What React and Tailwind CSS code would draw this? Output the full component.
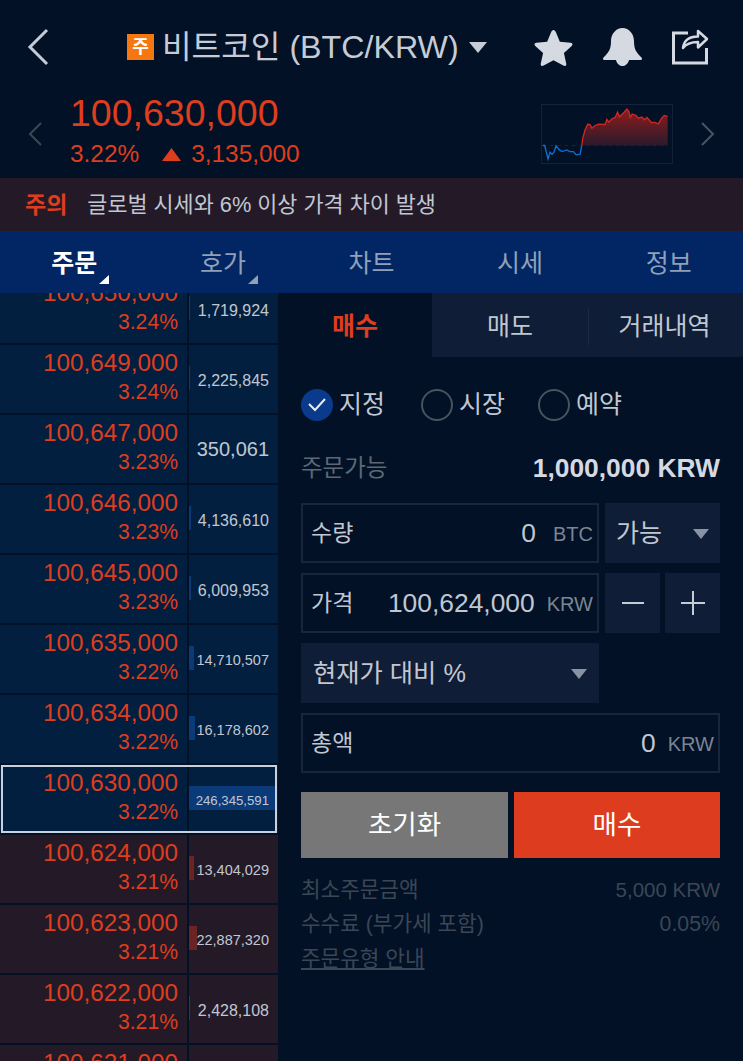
import React from 'react';

const rows = [
  { price: '100,650,000', pct: '3.24%', vol: '1,719,924', size: 'text-[16px] pt-[3px]', bar: 1 },
  { price: '100,649,000', pct: '3.24%', vol: '2,225,845', size: 'text-[16px] pt-[3px]', bar: 1 },
  { price: '100,647,000', pct: '3.23%', vol: '350,061', size: 'text-[20px]', bar: 0 },
  { price: '100,646,000', pct: '3.23%', vol: '4,136,610', size: 'text-[16px] pt-[3px]', bar: 2 },
  { price: '100,645,000', pct: '3.23%', vol: '6,009,953', size: 'text-[16px] pt-[3px]', bar: 2 },
  { price: '100,635,000', pct: '3.22%', vol: '14,710,507', size: 'text-[14.5px] pt-[3px]', bar: 5 },
  { price: '100,634,000', pct: '3.22%', vol: '16,178,602', size: 'text-[14.5px] pt-[3px]', bar: 6 },
  { price: '100,630,000', pct: '3.22%', vol: '246,345,591', size: 'text-[13.2px] pt-[3px]', bar: 88, current: true },
  { price: '100,624,000', pct: '3.21%', vol: '13,404,029', size: 'text-[14.5px] pt-[3px]', bar: 5, sell: true },
  { price: '100,623,000', pct: '3.21%', vol: '22,887,320', size: 'text-[14.5px] pt-[3px]', bar: 8, sell: true },
  { price: '100,622,000', pct: '3.21%', vol: '2,428,108', size: 'text-[16px] pt-[3px]', bar: 1, sell: true },
  { price: '100,621,000', pct: '3.21%', vol: '1,204,552', size: 'text-[16px] pt-[3px]', bar: 1, sell: true },
];

const OrderRow = ({ row }) => (
  <div className="relative flex h-[68px] mb-[2px] gap-[2px]">
    <div className={`w-[187px] flex flex-col items-end pr-[9px] ${row.sell ? 'bg-[#241a27]' : 'bg-[#031f3f]'}`}>
      <div className="text-[24.3px] leading-[36px] text-[#de3d1e]">{row.price}</div>
      <div className="text-[21.2px] leading-[24px] -mt-[1px] text-[#de3d1e]">{row.pct}</div>
    </div>
    <div className={`relative w-[89px] flex items-center justify-end pr-[9px] ${row.sell ? 'bg-[#241a27]' : 'bg-[#031f3f]'}`}>
      <div
        className={`absolute left-0 top-[21px] h-[24px] ${row.sell ? 'bg-[#6b2423]' : 'bg-[#0a3a78]'}`}
        style={{ width: row.bar }}
      />
      <span className={`relative ${row.size} text-[#c0c7d2]`}>{row.vol}</span>
    </div>
    {row.current && (
      <div className="absolute top-0 ml-[1px] w-[276px] h-[68px] border-2 border-[#c9d1dc]" />
    )}
  </div>
);

const Radio = ({ label, checked, className }) => (
  <div className={`flex items-center gap-[6px] ${className}`}>
    {checked ? (
      <div className="w-[32px] h-[32px] rounded-full bg-[#0a3a8c] flex items-center justify-center">
        <svg width="20" height="16" viewBox="0 0 20 16" fill="none" stroke="#e8edf4" strokeWidth="2">
          <path d="M2 7l6 6L18 2" />
        </svg>
      </div>
    ) : (
      <div className="w-[32px] h-[32px] rounded-full border-2 border-[#485261]" />
    )}
    <span className="text-[25px] text-[#c0c7d2]">{label}</span>
  </div>
);

const Caret = () => (
  <svg width="16" height="10" viewBox="0 0 16 10" fill="#8a93a3"><path d="M0 0h16L8 10z" /></svg>
);

const Field = ({ label, value, unit, unitSize, className }) => (
  <div className={`h-[60px] border-2 border-[#17253f] flex items-center pl-[8px] pr-[4px] pt-[2px] ${className}`}>
    <span className="text-[23px] text-[#c0c7d2]">{label}</span>
    <span className="ml-auto text-[26.4px] text-[#c0c7d2]">{value}</span>
    <span className={`${unitSize} text-[20px] text-[#7b8594]`}>{unit}</span>
  </div>
);

export default function App() {
  return (
    <div className="w-[743px] h-[1061px] overflow-hidden bg-[#021125] font-['Liberation_Sans','Noto_Sans_CJK_KR',sans-serif]">
      {/* top bar */}
      <div className="h-[94px] flex items-center relative">
        <svg className="ml-[27px]" width="22" height="38" viewBox="0 0 22 38" fill="none" stroke="#c6ccd6" strokeWidth="3">
          <path d="M20 2L3 19l17 17" />
        </svg>
        <div className="ml-[78px] w-[27px] h-[26px] bg-[#f5770f] flex items-center justify-center text-white font-bold text-[18px] leading-none">주</div>
        <div className="ml-[8px] text-[32.2px] text-[#c6ccd6] whitespace-nowrap">비트코인 (BTC/KRW)</div>
        <svg className="ml-[10px]" width="18" height="11" viewBox="0 0 18 11" fill="#c6ccd6"><path d="M0 0h18L9 11z" /></svg>
        <svg className="ml-[47px]" width="39" height="37" viewBox="0 0 40 38" fill="#d5dae2">
          <path d="M20 1c1 0 2 1 2.600 2.500l3.900 9.500 11 1c2 .2 2.700 2 1.200 3.400l-8 7.200 2.400 11c.4 2-1.200 3-3 2L20 32l-10.100 5.600c-1.800 1-3.400 0-3-2l2.400-11-8-7.200C-.2 16 .5 14.200 2.500 14l11-1 3.900-9.500C18 2 19 1 20 1z" />
        </svg>
        <svg className="ml-[30px]" width="39" height="38" viewBox="0 0 39 38" fill="#d5dae2">
          <path d="M19.500 0C26 0 31 6 31 13c0 8 2 11 7 16 2 2 1 3-1 3H26c-1 4-4 6-6.500 6S14 36 13 32H2c-2 0-3-1-1-3 5-5 7-8 7-16C8 6 13 0 19.500 0z" />
        </svg>
        <svg className="ml-[29px]" width="38" height="38" viewBox="0 0 38 38" fill="none" stroke="#d5dae2" strokeWidth="3">
          <path d="M17 5H2.500v30h33V20" />
          <path d="M12 20c1-8 7-11.500 15-11.500V3l9 8-9 8.500V14c-7 0-12 2-15 6z" strokeWidth="2.500" strokeLinejoin="round" />
        </svg>
      </div>

      {/* price summary */}
      <div className="h-[84px] flex items-start relative">
        <svg className="ml-[28px] mt-[28px]" width="14" height="24" viewBox="0 0 14 24" fill="none" stroke="#3d4857" strokeWidth="2">
          <path d="M13 1L2 12l11 11" />
        </svg>
        <div className="ml-[28px]">
          <div className="text-[37.5px] leading-[38px] text-[#de3d1e]">100,630,000</div>
          <div className="flex items-center mt-[5px] text-[#de3d1e] text-[24.4px] leading-[34px]">
            <span>3.22%</span>
            <svg className="ml-[23px]" width="19" height="13" viewBox="0 0 19 13" fill="#de3d1e"><path d="M9.500 0L19 13H0z" /></svg>
            <span className="ml-[10px]">3,135,000</span>
          </div>
        </div>
        <svg className="ml-auto mt-[10px]" width="132" height="60" viewBox="33 28 395 179">
          <defs>
            <linearGradient id="spark" x1="0" y1="0" x2="0" y2="1">
              <stop offset="0" stopColor="#8f1c1c" />
              <stop offset="1" stopColor="#2a1a2c" />
            </linearGradient>
          </defs>
          <rect x="34" y="29" width="393" height="177" fill="none" stroke="#17253a" strokeWidth="3" />
          <path d="M155 152L158 130 165 105 173 88 180 90 185 100 195 92 205 88 225 89 230 74 236 82 245 72 255 68 262 52 268 66 282 52 290 43 296 50 300 68 306 58 318 62 324 70 335 67 342 75 350 68 364 84 372 82 384 87 394 70 402 62 412 65V152z" fill="url(#spark)" />
          <path d="M38 152H412" stroke="#17253a" strokeWidth="3" strokeDasharray="10 12" fill="none" />
          <path d="M155 152L158 130 165 105 173 88 180 90 185 100 195 92 205 88 225 89 230 74 236 82 245 72 255 68 262 52 268 66 282 52 290 43 296 50 300 68 306 58 318 62 324 70 335 67 342 75 350 68 364 84 372 82 384 87 394 70 402 62 412 65" fill="none" stroke="#d3261f" strokeWidth="4" />
          <path d="M38 152H44L54 192 60 172 66 178 72 172 78 153 88 165 96 170 110 165 120 170 130 170 138 180 150 178 155 152" fill="none" stroke="#0f6fd1" strokeWidth="4" />
        </svg>
        <svg className="ml-[28px] mr-[28px] mt-[28px]" width="14" height="24" viewBox="0 0 14 24" fill="none" stroke="#4a5463" strokeWidth="2">
          <path d="M1 1l11 11L1 23" />
        </svg>
      </div>

      {/* notice */}
      <div className="h-[53px] flex items-center bg-[#241a27] pl-[25px] pt-[2px]">
        <span className="text-[23px] font-bold text-[#de3d1e]">주의</span>
        <span className="ml-[20px] text-[21.8px] text-[#c0c7d2]">글로벌 시세와 6% 이상 가격 차이 발생</span>
      </div>

      {/* tabs */}
      <div className="h-[62px] flex items-center bg-[#012663] text-[25px] text-[#8fa0b8]">
        {['주문', '호가', '차트', '시세', '정보'].map((t, i) => (
          <div key={t} className={`relative flex-1 h-full flex items-center justify-center pt-[3px] ${i === 0 ? 'text-white font-bold' : ''}`}>
            <span>{t}</span>
            {i < 2 && (
              <svg className="absolute left-[99px] top-[44px]" width="10" height="9" viewBox="0 0 10 9" fill={i === 0 ? '#ffffff' : '#8fa0b8'}>
                <path d="M10 0v9H0z" />
              </svg>
            )}
          </div>
        ))}
      </div>

      <div className="flex h-[768px]">
        {/* order book */}
        <div className="w-[278px] overflow-hidden shrink-0">
          <div className="-mt-[18px]">
            {rows.map((row) => <OrderRow key={row.price} row={row} />)}
          </div>
        </div>

        {/* order form */}
        <div className="flex-1">
          <div className="h-[64px] flex text-[25px]">
            <div className="w-[154px] flex items-center justify-center pt-[3px] font-bold text-[#de3d1e]">매수</div>
            <div className="flex-1 flex items-center pt-[3px] bg-[#101d36] text-[#c0c7d2]">
              <div className="w-[157px] text-center border-r border-[#1c2a45]">매도</div>
              <div className="flex-1 text-center pr-[3px]">거래내역</div>
            </div>
          </div>

          <div className="pl-[23px] pr-[23px]">
            <div className="flex items-center mt-[29px]">
              <Radio label="지정" checked className="w-[120px]" />
              <Radio label="시장" className="w-[117px]" />
              <Radio label="예약" />
            </div>
            <div className="flex items-center justify-between mt-[29px] h-[32px]">
              <span className="text-[23.5px] text-[#5d6776]">주문가능</span>
              <span className="text-[26.4px] font-bold text-[#d5dae2]">1,000,000 KRW</span>
            </div>

            <div className="flex gap-[6px] mt-[18px]">
              <Field label="수량" value="0" unit="BTC" unitSize="ml-[17px]" className="w-[298px]" />
              <div className="flex-1 h-[60px] bg-[#101d36] flex items-center justify-between pl-[11px] pr-[11px] pt-[2px]">
                <span className="text-[25px] text-[#c0c7d2]">가능</span>
                <Caret />
              </div>
            </div>

            <div className="flex gap-[6px] mt-[10px]">
              <Field label="가격" value="100,624,000" unit="KRW" unitSize="ml-[12px]" className="w-[298px]" />
              <div className="w-[55px] h-[60px] bg-[#101d36] flex items-center justify-center">
                <svg width="24" height="24" viewBox="0 0 24 24" stroke="#c6ccd6" strokeWidth="2"><path d="M1 12h22" /></svg>
              </div>
              <div className="w-[55px] -ml-[1px] h-[60px] bg-[#101d36] flex items-center justify-center">
                <svg width="24" height="24" viewBox="0 0 24 24" stroke="#c6ccd6" strokeWidth="2"><path d="M0 12h24M12 0v24" /></svg>
              </div>
            </div>

            <div className="w-[298px] h-[60px] mt-[10px] bg-[#101d36] flex items-center justify-between pl-[12px] pr-[12px] pt-[2px]">
              <span className="text-[25.3px] text-[#c0c7d2]">현재가 대비 %</span>
              <Caret />
            </div>

            <Field label="총액" value="0" unit="KRW" unitSize="ml-[12px]" className="mt-[10px]" />

            <div className="flex gap-[6px] mt-[19px] text-[26.5px] text-white">
              <div className="w-[207px] h-[66px] bg-[#777777] flex items-center justify-center pt-[3px]">초기화</div>
              <div className="flex-1 h-[66px] bg-[#dd3d1e] flex items-center justify-center pt-[3px]">매수</div>
            </div>

            <div className="mt-[15px] text-[21.3px] text-[#3b4656] leading-[34.5px]">
              <div className="flex justify-between"><span>최소주문금액</span><span className="text-[20.5px]">5,000 KRW</span></div>
              <div className="flex justify-between"><span>수수료 (부가세 포함)</span><span>0.05%</span></div>
              <div className="underline">주문유형 안내</div>
            </div>
          </div>
        </div>
      </div>
    </div>
  );
}
